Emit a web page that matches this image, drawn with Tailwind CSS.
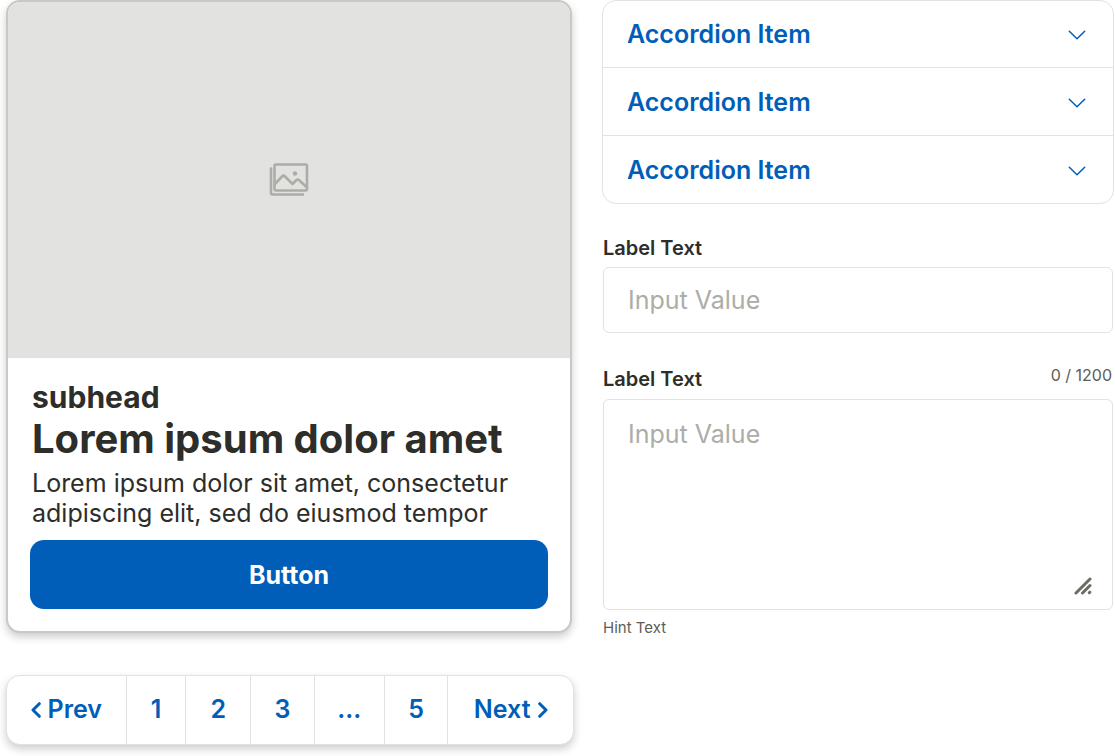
<!DOCTYPE html>
<html lang="en">
<head>
<meta charset="utf-8">
<meta name="viewport" content="width=device-width, initial-scale=1">
<title>Components</title>
<script src="https://cdn.jsdelivr.net/npm/@tailwindcss/browser@4"></script>
</head>
<body class="bg-white font-['Inter',sans-serif] text-[#2d2d2a]">
<main class="grid min-h-screen grid-cols-[568fr_512fr] items-start gap-7 pr-px pb-3 pl-1.5">
  <div class="flex flex-col gap-[42px]">
    <article class="mr-0.5 overflow-hidden rounded-[14px] border-2 border-[#c8c9c5] bg-white shadow-[0_4px_8px_rgba(0,0,0,0.2)]">
      <div class="flex h-[356px] items-center justify-center bg-[#e2e2e0]">
        <svg class="h-9 w-10" viewBox="0 0 40 36" fill="none" stroke="#acada7" stroke-width="2.6" stroke-linejoin="round" stroke-linecap="round" aria-hidden="true">
          <rect x="5.500" y="2.500" width="32.500" height="26" rx="1.500"/>
          <path d="M2 6.500V31a1.500 1.500 0 0 0 1.500 1.500H34"/>
          <path d="M5.500 22.500 13 14.500q1.500-1.500 3 0L23.500 22 27.500 18q1.200-1 2.400 0L37.500 25"/>
          <circle cx="26" cy="11.500" r="2.200" fill="#acada7" stroke="none"/>
        </svg>
      </div>
      <div class="px-[22px] pt-5 pb-[22px]">
        <p class="px-0.5 text-[30px] leading-[38px] font-bold">subhead</p>
        <h2 class="px-0.5 text-[40px] leading-[46px] font-bold">Lorem ipsum dolor amet</h2>
        <p class="px-0.5 pt-1.5 text-[25px] leading-[30px]">Lorem ipsum dolor sit amet, consectetur adipiscing elit, sed do eiusmod tempor</p>
        <button type="button" class="mt-3 block h-[69px] w-full rounded-[14px] bg-[#005eb8] pt-0.5 text-[25px] font-bold text-white">Button</button>
      </div>
    </article>
    <nav aria-label="Pagination" class="grid h-[70px] grid-cols-[120fr_60fr_65fr_64fr_70fr_64fr_125fr] divide-x divide-[#e2e2e0] overflow-hidden rounded-[14px] border border-[#e2e2e0] bg-white text-[25px] font-semibold text-[#005eb8] shadow-[0_4px_8px_rgba(0,0,0,0.2)]">
      <a href="#" class="flex items-center justify-center gap-[7px]">
        <svg class="h-4 w-2.5" viewBox="0 0 10 16" fill="none" stroke="currentColor" stroke-width="3" stroke-linecap="round" stroke-linejoin="round" aria-hidden="true"><path d="M8.300 1.700 2 8l6.300 6.300"/></svg>Prev</a>
      <a href="#" class="flex items-center justify-center">1</a>
      <a href="#" class="flex items-center justify-center">2</a>
      <a href="#" class="flex items-center justify-center">3</a>
      <span class="flex items-center justify-center">...</span>
      <a href="#" class="flex items-center justify-center">5</a>
      <a href="#" class="flex items-center justify-center gap-[7px]">Next
        <svg class="h-4 w-2.5" viewBox="0 0 10 16" fill="none" stroke="currentColor" stroke-width="3" stroke-linecap="round" stroke-linejoin="round" aria-hidden="true"><path d="M1.700 1.700 8 8l-6.300 6.300"/></svg></a>
    </nav>
  </div>
  <div>
    <div class="divide-y divide-[#e2e2e0] overflow-hidden rounded-[14px] border border-[#e2e2e0] text-[25px] font-semibold text-[#005eb8]">
      <button type="button" aria-expanded="false" class="flex h-[67px] w-full items-center justify-between pt-0.5 pr-[27px] pl-6">Accordion Item
        <svg class="h-2.5 w-[18px]" viewBox="0 0 18 10" fill="none" stroke="currentColor" stroke-width="1.500" stroke-linecap="round" stroke-linejoin="round" aria-hidden="true"><path d="M1.300 1.200 9 8.700l7.700-7.500"/></svg></button>
      <button type="button" aria-expanded="false" class="flex h-[68px] w-full items-center justify-between pt-0.5 pr-[27px] pl-6">Accordion Item
        <svg class="h-2.5 w-[18px]" viewBox="0 0 18 10" fill="none" stroke="currentColor" stroke-width="1.500" stroke-linecap="round" stroke-linejoin="round" aria-hidden="true"><path d="M1.300 1.200 9 8.700l7.700-7.500"/></svg></button>
      <button type="button" aria-expanded="false" class="flex h-[67px] w-full items-center justify-between pt-0.5 pr-[27px] pl-6">Accordion Item
        <svg class="h-2.5 w-[18px]" viewBox="0 0 18 10" fill="none" stroke="currentColor" stroke-width="1.500" stroke-linecap="round" stroke-linejoin="round" aria-hidden="true"><path d="M1.300 1.200 9 8.700l7.700-7.500"/></svg></button>
    </div>
    <div class="px-px pt-8">
      <label for="short" class="block text-xl leading-6 font-semibold">Label Text</label>
      <input id="short" type="text" placeholder="Input Value" class="mt-[7px] block h-[66px] w-full rounded-md border border-[#e2e2e0] px-6 text-[25px] placeholder:text-[#acada7]">
    </div>
    <div class="px-px pt-[34px]">
      <div class="flex items-start justify-between">
        <label for="long" class="text-xl leading-6 font-semibold">Label Text</label>
        <span class="pr-px text-base leading-4 text-[#5c5d57]">0 / 1200</span>
      </div>
      <div class="relative mt-2">
        <textarea id="long" placeholder="Input Value" class="block h-[211px] w-full resize-none rounded-md border border-[#e2e2e0] px-6 py-4 text-[25px] placeholder:text-[#acada7]"></textarea>
        <svg class="pointer-events-none absolute right-[21px] bottom-[15px] h-[18px] w-[18px]" viewBox="0 0 18 18" fill="none" stroke="#6b6c64" stroke-width="3" stroke-linecap="round" aria-hidden="true"><path d="M2 16 16 2M8.500 16 16 8.500M15.300 15.700l.5-.5"/></svg>
      </div>
      <p class="mt-2 text-[15px] leading-5 text-[#5c5d57]">Hint Text</p>
    </div>
  </div>
</main>
</body>
</html>
